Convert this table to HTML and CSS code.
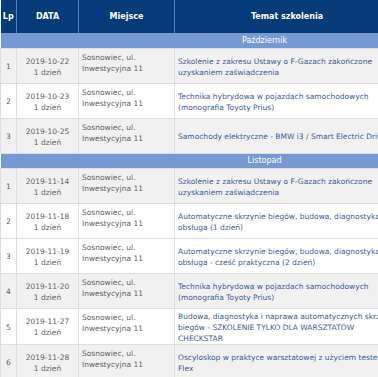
FILE: index.html
```html
<!DOCTYPE html>
<html lang="pl">
<head>
    <meta charset="UTF-8">
    <meta name="viewport" content="width=device-width, initial-scale=1.0">
    <title>Harmonogram szkoleń</title>
    <link rel="stylesheet" href="styles.css">
</head>
<body>
    <table class="szkolenia">
        <colgroup>
            <col class="col-lp">
            <col class="col-data">
            <col class="col-miejsce">
            <col class="col-temat">
            <col class="col-cena">
            <col class="col-zapis">
        </colgroup>
        <thead>
            <tr>
                <th>Lp</th>
                <th>DATA</th>
                <th>Miejsce</th>
                <th>Temat szkolenia</th>
                <th>Cena netto</th>
                <th>Zapisy</th>
            </tr>
        </thead>
        <tbody>
            <tr class="miesiac"><td colspan="6">Październik</td></tr>
            <tr class="szary">
                <td class="lp">1</td>
                <td class="data">2019-10-22<br>1 dzień</td>
                <td class="miejsce">Sosnowiec, ul. Inwestycyjna 11</td>
                <td class="temat">Szkolenie z zakresu Ustawy o F-Gazach zakończone uzyskaniem zaświadczenia</td>
                <td class="cena">590 zł</td>
                <td class="zapis">Zapisz się</td>
            </tr>
            <tr>
                <td class="lp">2</td>
                <td class="data">2019-10-23<br>1 dzień</td>
                <td class="miejsce">Sosnowiec, ul. Inwestycyjna 11</td>
                <td class="temat">Technika hybrydowa w pojazdach samochodowych (monografia Toyoty Prius)</td>
                <td class="cena">490 zł</td>
                <td class="zapis">Zapisz się</td>
            </tr>
            <tr class="szary">
                <td class="lp">3</td>
                <td class="data">2019-10-25<br>1 dzień</td>
                <td class="miejsce">Sosnowiec, ul. Inwestycyjna 11</td>
                <td class="temat">Samochody elektryczne - BMW i3 / Smart Electric Drive</td>
                <td class="cena">490 zł</td>
                <td class="zapis">Zapisz się</td>
            </tr>
            <tr class="miesiac"><td colspan="6">Listopad</td></tr>
            <tr class="szary">
                <td class="lp">1</td>
                <td class="data">2019-11-14<br>1 dzień</td>
                <td class="miejsce">Sosnowiec, ul. Inwestycyjna 11</td>
                <td class="temat">Szkolenie z zakresu Ustawy o F-Gazach zakończone uzyskaniem zaświadczenia</td>
                <td class="cena">590 zł</td>
                <td class="zapis">Zapisz się</td>
            </tr>
            <tr>
                <td class="lp">2</td>
                <td class="data">2019-11-18<br>1 dzień</td>
                <td class="miejsce">Sosnowiec, ul. Inwestycyjna 11</td>
                <td class="temat">Automatyczne skrzynie biegów, budowa, diagnostyka i obsługa (1 dzień)</td>
                <td class="cena">490 zł</td>
                <td class="zapis">Zapisz się</td>
            </tr>
            <tr>
                <td class="lp">3</td>
                <td class="data">2019-11-19<br>1 dzień</td>
                <td class="miejsce">Sosnowiec, ul. Inwestycyjna 11</td>
                <td class="temat">Automatyczne skrzynie biegów, budowa, diagnostyka i obsługa - cześć praktyczna (2 dzień)</td>
                <td class="cena">490 zł</td>
                <td class="zapis">Zapisz się</td>
            </tr>
            <tr class="szary">
                <td class="lp">4</td>
                <td class="data">2019-11-20<br>1 dzień</td>
                <td class="miejsce">Sosnowiec, ul. Inwestycyjna 11</td>
                <td class="temat">Technika hybrydowa w pojazdach samochodowych (monografia Toyoty Prius)</td>
                <td class="cena">490 zł</td>
                <td class="zapis">Zapisz się</td>
            </tr>
            <tr>
                <td class="lp">5</td>
                <td class="data">2019-11-27<br>1 dzień</td>
                <td class="miejsce">Sosnowiec, ul. Inwestycyjna 11</td>
                <td class="temat">Budowa, diagnostyka i naprawa automatycznych skrzyń biegów - SZKOLENIE TYLKO DLA WARSZTATÓW CHECKSTAR</td>
                <td class="cena">0 zł</td>
                <td class="zapis">Zapisz się</td>
            </tr>
            <tr class="szary">
                <td class="lp">6</td>
                <td class="data">2019-11-28<br>1 dzień</td>
                <td class="miejsce">Sosnowiec, ul. Inwestycyjna 11</td>
                <td class="temat">Oscyloskop w praktyce warsztatowej z użyciem testera Flex</td>
                <td class="cena">490 zł</td>
                <td class="zapis">Zapisz się</td>
            </tr>
        </tbody>
    </table>
</body>
</html>
```

FILE: styles.css
```css
body {
    margin: 0;
    overflow: hidden;
    font-family: 'DejaVu Sans', Verdana, sans-serif;
    font-size: 7.5px;
    color: #626262;
    background-color: #fff;
}
.szkolenia {
    border-collapse: collapse;
    table-layout: fixed;
    width: 528px;
}
.col-lp { width: 16px; }
.col-data { width: 62px; }
.col-miejsce { width: 96px; }
.col-temat { width: 225px; }
.col-cena { width: 64px; }
.col-zapis { width: 65px; }
.szkolenia th {
    background-color: #063b7a;
    color: #fff;
    font-size: 8px;
    font-weight: bold;
    height: 33px;
    padding: 0;
    text-align: center;
    border-left: 1px solid #5a7fb2;
    box-sizing: border-box;
}
.szkolenia th:first-child {
    border-left: none;
}
.szkolenia td {
    height: 35px;
    padding: 2px 3px 0;
    line-height: 11px;
    border: 1px solid #dedede;
    box-sizing: border-box;
    vertical-align: middle;
}
.szkolenia tr.miesiac td {
    height: 15px;
    padding: 0;
    background-color: #7799d3;
    color: #fff;
    font-size: 8px;
    text-align: center;
    border: none;
}
.szary td {
    background-color: #f1f1f1;
}
.lp {
    text-align: center;
}
.data {
    text-align: center;
}
.szkolenia td.miejsce {
    vertical-align: top;
    padding-top: 3px;
}
.temat {
    color: #3d5b9b;
    padding-left: 4px;
}
.cena, .zapis {
    text-align: center;
}
```
